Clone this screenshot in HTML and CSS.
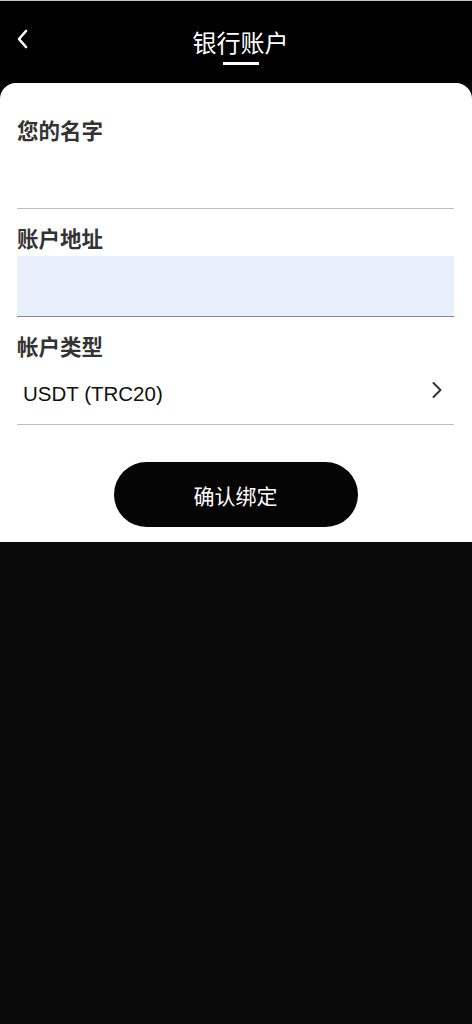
FILE: index.html
```html
<!DOCTYPE html>
<html lang="zh-CN">
<head>
<meta charset="utf-8">
<meta name="viewport" content="width=device-width, initial-scale=1">
<title>银行账户</title>
<link rel="stylesheet" href="styles.css">
</head>
<body>
<div class="page">
  <header class="topbar">
    <button class="back" aria-label="返回">
      <svg width="12" height="20" viewBox="0 0 12 20"><path d="M10 2 L3 10 L10 18" fill="none" stroke="#fff" stroke-width="2.6" stroke-linecap="round" stroke-linejoin="round"/></svg>
    </button>
    <div class="title">
      <span class="title-text">银行账户</span>
      <span class="title-bar"></span>
    </div>
  </header>
  <main class="card">
    <div class="field">
      <div class="label">您的名字</div>
      <div class="input"></div>
    </div>
    <div class="field">
      <div class="label">账户地址</div>
      <div class="input filled"></div>
    </div>
    <div class="field">
      <div class="label">帐户类型</div>
      <div class="input select">
        <span class="value">USDT (TRC20)</span>
        <svg class="chev" width="12" height="18" viewBox="0 0 12 18"><path d="M2.5 2 L9.5 9 L2.5 16" fill="none" stroke="#333" stroke-width="2" stroke-linecap="round" stroke-linejoin="round"/></svg>
      </div>
    </div>
    <div class="actions">
      <button class="submit">确认绑定</button>
    </div>
  </main>
</div>
</body>
</html>
```

FILE: styles.css
```css
* { box-sizing: border-box; }
html, body {
  margin: 0;
  padding: 0;
  background: #0a0a0a;
  font-family: "Noto Sans CJK SC", "Noto Sans", "Liberation Sans", sans-serif;
}
.page {
  min-height: 1024px;
  display: flex;
  flex-direction: column;
  background: #0a0a0a;
  border-top: 1px solid #c4c4c4;
}
.topbar {
  height: 82px;
  background: #000;
  position: relative;
  display: flex;
  justify-content: center;
}
.back {
  position: absolute;
  left: 15px;
  top: 27px;
  background: none;
  border: 0;
  padding: 0;
  width: 14px;
  height: 22px;
  display: flex;
  align-items: center;
  justify-content: center;
}
.title {
  display: flex;
  flex-direction: column;
  align-items: center;
  padding-top: 24px;
  padding-left: 9px;
}
.title-text {
  color: #fff;
  font-size: 24px;
  line-height: 34px;
  font-weight: 400;
}
.title-bar {
  width: 36px;
  height: 3px;
  background: #fff;
  margin-top: 3px;
}
.card {
  background: #fff;
  border-radius: 16px 16px 0 0;
  padding: 18px 18px 15px 17px;
  display: flex;
  flex-direction: column;
}
.field {
  padding-top: 15px;
  display: flex;
  flex-direction: column;
}
.label {
  font-size: 21.5px;
  line-height: 28px;
  font-weight: 700;
  color: #333;
  margin-bottom: 4px;
}
.input {
  height: 61px;
  border-bottom: 1px solid #bdbdbd;
}
.input.filled {
  background: #e8f0fe;
  border-bottom-color: #85859a;
}
.input.select {
  display: flex;
  align-items: center;
  justify-content: space-between;
  padding: 0 11px 0 6px;
}
.value {
  font-family: "Liberation Sans", Arial, sans-serif;
  font-size: 20.5px;
  color: #111;
}
.chev {
  margin-top: -8px;
}
.actions {
  display: flex;
  justify-content: center;
  margin-top: 37px;
}
.submit {
  width: 244px;
  height: 65px;
  border: 0;
  border-radius: 33px;
  background: #050505;
  color: #fff;
  font-family: "Noto Sans CJK SC", "Noto Sans", sans-serif;
  font-size: 21px;
  font-weight: 400;
}
```
